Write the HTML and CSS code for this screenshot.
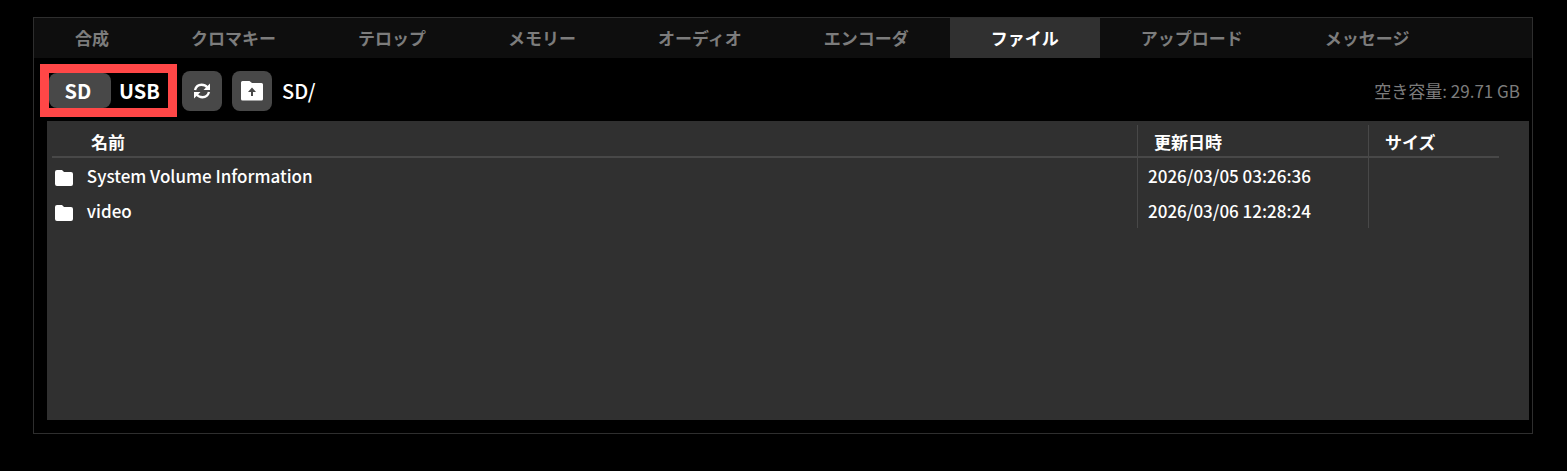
FILE: index.html
```html
<!DOCTYPE html>
<html lang="ja">
<head>
    <meta charset="UTF-8">
    <meta name="viewport" content="width=device-width, initial-scale=1.0">
    <title>ファイル</title>
    <link rel="stylesheet" href="styles.css">
</head>
<body>

<div class="container">
    <nav class="tabs">
        <button>合成</button>
        <button>クロマキー</button>
        <button>テロップ</button>
        <button>メモリー</button>
        <button>オーディオ</button>
        <button>エンコーダ</button>
        <button class="active">ファイル</button>
        <button>アップロード</button>
        <button>メッセージ</button>
    </nav>

    <div class="toolbar">
        <div class="storage">
            <button class="selected">SD</button>
            <button>USB</button>
        </div>
        <button class="icon-button" aria-label="更新">
            <svg width="18" height="18" viewBox="0 0 18 18" fill="none" stroke="#fff" stroke-width="2.400">
                <path d="M2 8C3 4.500 5.500 2.800 8.500 2.800C11 2.800 13 3.800 14.500 5.500"/>
                <path d="M16 10C15 13.500 12.500 15.200 9.500 15.200C7 15.200 5 14.200 3.500 12.500"/>
                <path d="M17 1.500V8H10.500Z" fill="#fff" stroke="none"/>
                <path d="M1 16.500V10H7.500Z" fill="#fff" stroke="none"/>
            </svg>
        </button>
        <button class="icon-button" aria-label="上のフォルダへ">
            <svg width="22" height="20" viewBox="0 0 22 20">
                <path d="M1.500 0H8.500L11 2H20.500Q22 2 22 3.500V18Q22 19.500 20.500 19.500H1.500Q0 19.500 0 18V1.500Q0 0 1.500 0Z" fill="#fff"/>
                <path d="M11 6.500L15 11H12V15H10V11H7Z" fill="#484848"/>
            </svg>
        </button>
        <span class="path">SD/</span>
        <span class="free">空き容量: 29.71 GB</span>
    </div>

    <div class="files">
        <table>
            <thead>
                <tr><th>名前</th><th class="date">更新日時</th><th class="size">サイズ</th></tr>
            </thead>
            <tbody>
                <tr>
                    <td class="name">
                        <svg width="18" height="16" viewBox="0 0 18 16"><path d="M2 0H7L9 2H16Q18 2 18 4V14Q18 16 16 16H2Q0 16 0 14V2Q0 0 2 0Z" fill="#fff"/></svg>
                        System Volume Information
                    </td>
                    <td>2026/03/05 03:26:36</td>
                    <td></td>
                </tr>
                <tr>
                    <td class="name">
                        <svg width="18" height="16" viewBox="0 0 18 16"><path d="M2 0H7L9 2H16Q18 2 18 4V14Q18 16 16 16H2Q0 16 0 14V2Q0 0 2 0Z" fill="#fff"/></svg>
                        video
                    </td>
                    <td>2026/03/06 12:28:24</td>
                    <td></td>
                </tr>
            </tbody>
        </table>
    </div>
</div>

</body>
</html>
```
FILE: styles.css
```css
* {
    box-sizing: border-box;
}

body {
    display: flex;
    min-height: 100vh;
    margin: 0;
    padding: 17px 34px 37px 33px;
    background-color: #000;
    color: #fff;
    font-family: "Noto Sans CJK JP", sans-serif;
    font-size: 17px;
    line-height: 24px;
}

button {
    padding: 0;
    border: none;
    background: none;
    color: inherit;
    font: inherit;
    cursor: pointer;
}

.container {
    flex: 1;
    display: flex;
    flex-direction: column;
    border: 1px solid #2e2e2e;
}

.tabs {
    display: flex;
    height: 40px;
    background-color: #0e0e0e;
}

.tabs button {
    padding: 0 41px;
    color: #7c7c7c;
    font-weight: bold;
    white-space: nowrap;
}

.tabs .active {
    background-color: #303030;
    color: #fff;
}

.toolbar {
    display: flex;
    align-items: center;
    gap: 10px;
    padding: 6px 12px 4px 6px;
}

.storage {
    display: flex;
    height: 53px;
    margin-right: -5px;
    border: 9px solid #ff4747;
    font-size: 20px;
    font-weight: bold;
}

.storage button {
    width: 57px;
}

.storage .selected {
    width: 62px;
    padding-right: 4px;
    border-radius: 8px;
    background-color: #484848;
}

.icon-button {
    display: flex;
    align-items: center;
    justify-content: center;
    width: 40px;
    height: 40px;
    border-radius: 8px;
    background-color: #484848;
}

.path {
    font-size: 20px;
    font-weight: 500;
}

.free {
    margin-left: auto;
    color: #7c7c7c;
}

.files {
    flex: 1;
    margin: 0 3px 13px 13px;
    padding: 4px 30px 4px 5px;
    background-color: #303030;
}

table {
    width: 100%;
    border-spacing: 0;
    table-layout: fixed;
    font-weight: 500;
}

th {
    height: 33px;
    padding: 3px 16px 0;
    border-bottom: 2px solid #484848;
    text-align: left;
    font-weight: bold;
}

th:first-child {
    padding-left: 39px;
}

td {
    height: 35px;
    padding: 0 10px;
}

th + th,
td + td {
    border-left: 1px solid #484848;
}

.date {
    width: 231px;
}

.size {
    width: 131px;
}

.name {
    padding-left: 3px;
}

.name svg {
    margin-right: 10px;
    vertical-align: -3px;
}
```
